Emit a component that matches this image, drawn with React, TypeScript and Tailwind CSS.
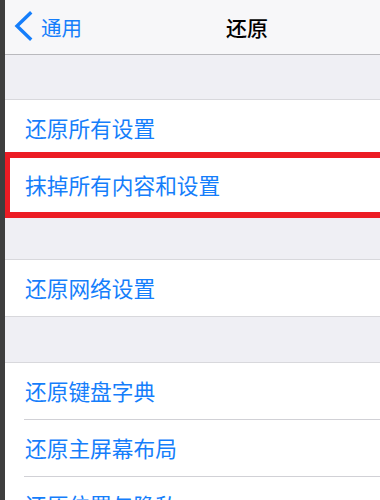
const font = { fontFamily: '"Noto Sans CJK SC", "Noto Sans", sans-serif' };

function Row({ label, sep }: { label: string; sep?: boolean }) {
  return (
    <div className="relative">
      <div className="h-[56px] flex items-center pl-5 pb-[1px] text-[21.7px] text-[#157efb] leading-none">
        {label}
      </div>
      {sep && <div className="ml-[19px] h-px bg-[#d1d1d6]" />}
    </div>
  );
}

export default function App() {
  return (
    <div className="flex w-[380px] h-[500px] overflow-hidden" style={font}>
      <div className="w-[5px] bg-[#3e3e3e] shrink-0" />
      <div className="flex-1 flex flex-col bg-[#efeff4]">
        {/* nav bar */}
        <div className="h-[55px] shrink-0 bg-[#f7f7f9] border-b border-[#b9b9bd] flex items-center">
          <div className="flex items-center pl-[8px] text-[#157efb]">
            <svg width="21" height="30" viewBox="0 0 21 30" className="mt-[-2px]">
              <polyline points="17,2.5 4,15 17,27.5" fill="none" stroke="#157efb" strokeWidth="3.4" strokeLinecap="square" />
            </svg>
            <span className="ml-[7px] text-[20.5px] leading-none">通用</span>
          </div>
          <div className="ml-[144px] text-[21px] font-medium text-black leading-none">还原</div>
        </div>

        <div className="h-[44px] shrink-0" />

        <div className="bg-white border-y border-[#d8d8dc] shrink-0">
          <Row label="还原所有设置" sep />
          <div className="relative">
            <Row label="抹掉所有内容和设置" />
            <div className="absolute -top-[5px] -bottom-[5px] left-0 -right-[10px] border-[#ec1c24] border-y-[6px] border-l-[5px] pointer-events-none" />
          </div>
        </div>

        <div className="h-[45px] shrink-0" />

        <div className="bg-white border-y border-[#d8d8dc] shrink-0">
          <Row label="还原网络设置" />
        </div>

        <div className="h-[45px] shrink-0" />

        <div className="bg-white border-t border-[#d8d8dc] shrink-0">
          <Row label="还原键盘字典" sep />
          <Row label="还原主屏幕布局" sep />
          <Row label="还原位置与隐私" sep />
        </div>
      </div>
    </div>
  );
}
